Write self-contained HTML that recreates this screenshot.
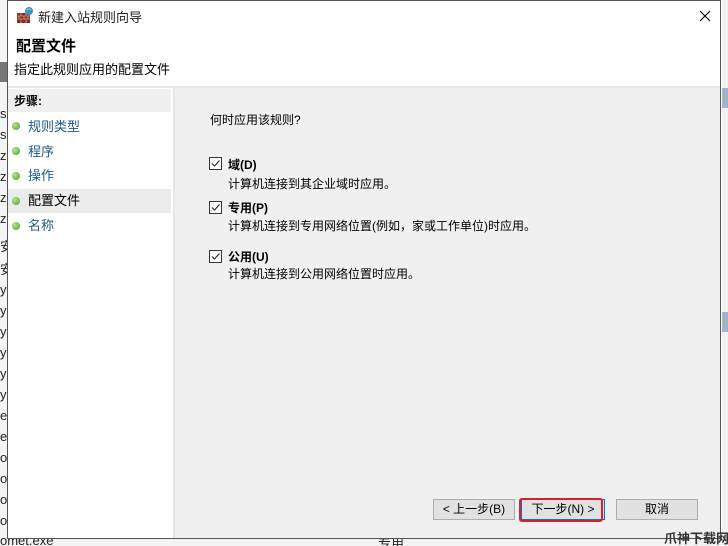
<!DOCTYPE html>
<html><head><meta charset="utf-8"><style>
*{margin:0;padding:0;box-sizing:border-box}
html,body{width:728px;height:546px;overflow:hidden}
body{background:#fff;font-family:"Liberation Sans","Noto Sans CJK SC",sans-serif;font-size:12px;color:#000;position:relative}
.a{position:absolute;white-space:nowrap}
.bgl{left:0;font-size:13px;color:#222}
.cb{position:absolute;width:13px;height:13px;border:1px solid #333;background:#fff}
.btn{position:absolute;height:21px;border:1px solid #adadad;background:#e1e1e1;text-align:center;line-height:19px;font-size:12px;white-space:nowrap}
.dot{position:absolute;left:12px;width:8px;height:8px;border-radius:50%;background:radial-gradient(circle at 35% 35%,#b6e58a,#4a9e2a)}
.step{position:absolute;left:28px;font-size:13px;color:#1d5a8c;white-space:nowrap}
</style></head><body>
<div class="a" style="left:0;top:0;width:7px;height:546px;background:#f5f5f5"></div>
<div class="a" style="left:0;top:62px;width:7px;height:20px;background:#777"></div>
<div class="a bgl" style="top:106px">se</div>
<div class="a bgl" style="top:127px">se</div>
<div class="a bgl" style="top:148px">zi</div>
<div class="a bgl" style="top:169px">zi</div>
<div class="a bgl" style="top:190px">zi</div>
<div class="a bgl" style="top:211px">zi</div>
<div class="a bgl" style="top:236px">安</div>
<div class="a bgl" style="top:259px">安</div>
<div class="a bgl" style="top:282px">y</div><div class="a bgl" style="top:303px">y</div><div class="a bgl" style="top:324px">y</div><div class="a bgl" style="top:345px">y</div><div class="a bgl" style="top:366px">y</div><div class="a bgl" style="top:387px">y</div>
<div class="a bgl" style="top:408px">e</div><div class="a bgl" style="top:429px">e</div>
<div class="a bgl" style="top:450px">o</div><div class="a bgl" style="top:471px">o</div><div class="a bgl" style="top:492px">o</div><div class="a bgl" style="top:513px">o</div>
<div class="a" style="left:0;top:538px;width:728px;height:8px;background:#f3f3f3"></div>
<div class="a bgl" style="top:533px;font-size:13px">omet.exe</div>
<div class="a bgl" style="left:378px;top:533px;font-size:13px">专用</div>
<div class="a" style="left:722px;top:0;width:6px;height:546px;background:#f2f2f2"></div>
<div class="a" style="left:722px;top:88px;width:6px;height:20px;background:#9fb4cc"></div>
<div class="a" style="left:722px;top:312px;width:6px;height:20px;background:#9fb4cc"></div>
<div class="a" style="left:7px;top:0;width:714px;height:539px;border:1px solid #555;background:#fff"></div>
<svg class="a" style="left:16px;top:6px" width="18" height="18" viewBox="0 0 18 18"><rect x="1" y="7" width="13" height="10" fill="#8b2a20"/><path d="M1 10h13M1 13h13M5 7v3M10 7v3M3 10v3M8 10v3M12 10v3M5 13v4M10 13v4" stroke="#d9a080" stroke-width="0.8"/><circle cx="13" cy="5" r="4" fill="#3a8fd0"/><path d="M11 4q2-2 4 0" stroke="#9ad06a" stroke-width="1.5" fill="none"/></svg>
<div class="a" style="left:38px;top:7px;font-size:13px;color:#222">新建入站规则向导</div>
<svg class="a" style="left:699px;top:10px" width="12" height="12"><path d="M1 1L11 11M11 1L1 11" stroke="#000" stroke-width="1.1"/></svg>
<div class="a" style="left:16px;top:35px;font-size:15px;font-weight:bold">配置文件</div>
<div class="a" style="left:14px;top:59px;font-size:13px">指定此规则应用的配置文件</div>
<div class="a" style="left:8px;top:86px;width:712px;height:2px;background:#e8e8e8"></div>
<div class="a" style="left:8px;top:88px;width:165px;height:450px;background:#fff"></div>
<div class="a" style="left:8px;top:89px;width:163px;height:23px;background:#f0f0f0"></div>
<div class="a" style="left:14px;top:92px;font-size:12px;font-weight:bold">步骤:</div>
<div class="a" style="left:8px;top:189px;width:163px;height:24px;background:#ebebeb"></div>
<div class="dot" style="top:122px"></div><div class="step" style="top:116px">规则类型</div>
<div class="dot" style="top:147px"></div><div class="step" style="top:141px">程序</div>
<div class="dot" style="top:172px"></div><div class="step" style="top:165px">操作</div>
<div class="dot" style="top:197px"></div><div class="step" style="top:190px;color:#000">配置文件</div>
<div class="dot" style="top:222px"></div><div class="step" style="top:215px">名称</div>
<div class="a" style="left:173px;top:88px;width:2px;height:450px;background:#e6e6e6"></div>
<div class="a" style="left:175px;top:88px;width:545px;height:450px;background:#f0f0f0"></div>
<div class="a" style="left:210px;top:111px;font-size:12px">何时应用该规则?</div>
<div class="cb" style="left:209px;top:157px"><svg width="11" height="11" style="position:absolute;left:0;top:0"><path d="M2 5.5L4.5 8L9.5 2.5" stroke="#222" stroke-width="1.1" fill="none"/></svg></div>
<div class="a" style="left:228px;top:156px;font-weight:bold;font-size:12px">域(D)</div>
<div class="a" style="left:228px;top:175px;font-size:12px">计算机连接到其企业域时应用。</div>
<div class="cb" style="left:209px;top:201px"><svg width="11" height="11" style="position:absolute;left:0;top:0"><path d="M2 5.5L4.5 8L9.5 2.5" stroke="#222" stroke-width="1.1" fill="none"/></svg></div>
<div class="a" style="left:228px;top:199px;font-weight:bold;font-size:12px">专用(P)</div>
<div class="a" style="left:228px;top:217px;font-size:12px">计算机连接到专用网络位置(例如，家或工作单位)时应用。</div>
<div class="cb" style="left:209px;top:250px"><svg width="11" height="11" style="position:absolute;left:0;top:0"><path d="M2 5.5L4.5 8L9.5 2.5" stroke="#222" stroke-width="1.1" fill="none"/></svg></div>
<div class="a" style="left:228px;top:248px;font-weight:bold;font-size:12px">公用(U)</div>
<div class="a" style="left:228px;top:265px;font-size:12px">计算机连接到公用网络位置时应用。</div>
<div class="btn" style="left:433px;top:499px;width:82px">&lt; 上一步(B)</div>
<div class="btn" style="left:521px;top:499px;width:84px;border:1px solid #0078d7">下一步(N) &gt;</div>
<div class="a" style="left:519px;top:498px;width:84px;height:24px;border:2px solid #d8202a;border-radius:3px"></div>
<div class="btn" style="left:616px;top:499px;width:82px">取消</div>
<div class="a" style="left:664px;top:528px;font-size:13px;font-weight:bold;color:#333">爪神下载网</div>
</body></html>
